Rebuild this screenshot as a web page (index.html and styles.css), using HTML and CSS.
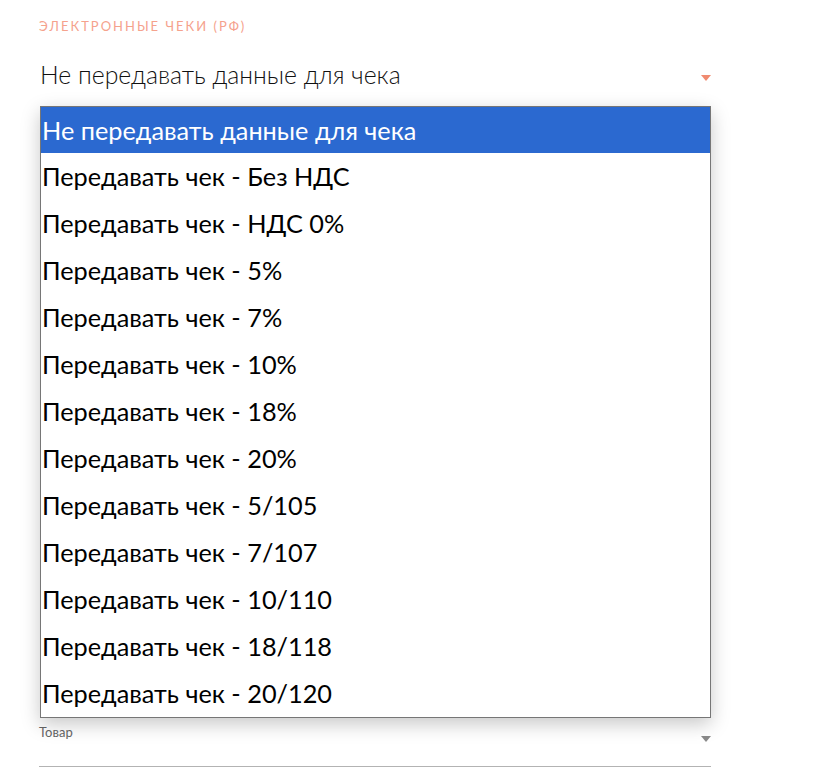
FILE: index.html
```html
<!DOCTYPE html>
<html lang="ru">
<head>
<meta charset="utf-8">
<title>Электронные чеки</title>
<link rel="stylesheet" href="styles.css">
</head>
<body>
<form class="form">
  <div class="field field-receipt">
    <div class="field-label accent">ЭЛЕКТРОННЫЕ ЧЕКИ (РФ)</div>
    <div class="select">
      <span class="select-value">Не передавать данные для чека</span>
      <span class="arrow arrow-accent"></span>
    </div>
    <ul class="dropdown">
      <li class="option selected">Не передавать данные для чека</li>
      <li class="option">Передавать чек - Без НДС</li>
      <li class="option">Передавать чек - НДС 0%</li>
      <li class="option">Передавать чек - 5%</li>
      <li class="option">Передавать чек - 7%</li>
      <li class="option">Передавать чек - 10%</li>
      <li class="option">Передавать чек - 18%</li>
      <li class="option">Передавать чек - 20%</li>
      <li class="option">Передавать чек - 5/105</li>
      <li class="option">Передавать чек - 7/107</li>
      <li class="option">Передавать чек - 10/110</li>
      <li class="option">Передавать чек - 18/118</li>
      <li class="option">Передавать чек - 20/120</li>
    </ul>
  </div>
  <div class="covered"></div>
  <div class="field field-small">
    <div class="small-label">Товар</div>
    <div class="select select-small">
      <span class="select-value"></span>
      <span class="arrow arrow-gray"></span>
    </div>
  </div>
</form>
</body>
</html>
```
FILE: styles.css
```css
html, body {
  margin: 0;
  padding: 0;
  background: #fff;
}
body {
  font-family: "Lato", "Open Sans", sans-serif;
  color: #111;
}
.form {
  width: 672px;
  padding: 18px 0 0 39px;
}
.field {
  position: relative;
}
.field-label {
  font-size: 13px;
  letter-spacing: 2px;
  line-height: 16px;
}
.accent {
  color: #f5a28d;
}
.select {
  display: flex;
  align-items: center;
  justify-content: space-between;
  height: 40px;
  margin-top: 20px;
  padding-left: 1px;
}
.select-value {
  font-size: 24.8px;
  font-weight: 300;
  line-height: 29px;
  color: #111;
}
.arrow {
  width: 0;
  height: 0;
  border-left: 5.5px solid transparent;
  border-right: 5.5px solid transparent;
  border-top: 6px solid #f08a70;
  margin-top: 8px;
}
.arrow-gray {
  border-top-color: #8a8a8a;
}
.dropdown {
  position: absolute;
  left: 1px;
  top: 88px;
  width: 669px;
  margin: 0;
  padding: 0;
  list-style: none;
  background: #fff;
  border: 1px solid #767676;
  box-shadow: 0 6px 18px rgba(0, 0, 0, 0.22);
  z-index: 2;
}
.option {
  height: 47px;
  line-height: 46px;
  font-size: 25.3px;
  padding-left: 1px;
  color: #000;
  white-space: nowrap;
}
.option.selected {
  height: 46px;
  background: #2b69d0;
  color: #fff;
}
.covered {
  height: 630px;
}
.field-small {
  border-bottom: 1px solid #b3b3b3;
}
.small-label {
  font-size: 13px;
  color: #666;
  line-height: 16px;
}
.select-small {
  margin-top: 0;
  height: 26px;
  align-items: flex-start;
}
.select-small .arrow {
  margin-top: -4px;
}
```
